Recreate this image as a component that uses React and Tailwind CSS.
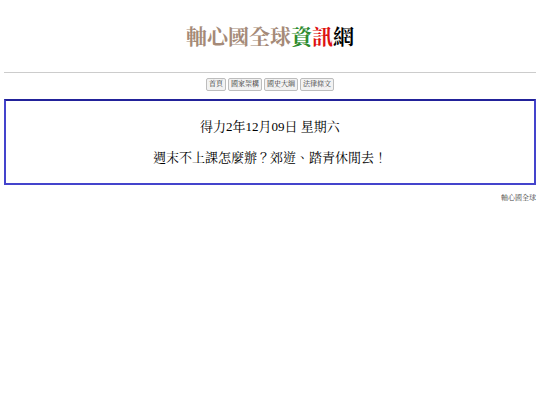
export default function App() {
  const menu = ["首頁", "國家架構", "國史大綱", "法律條文"];

  return (
    <div
      className="min-h-[405px] bg-white px-1 text-black"
      style={{ fontFamily: '"Liberation Serif", "Noto Serif CJK TC", "Noto Sans CJK TC", serif' }}
    >
      <h1 className="pt-[23px] pb-[21px] text-center text-[21px] font-bold leading-[28px]">
        <span className="text-[#a58a78]">軸心國全球</span>
        <span className="text-[#2e8b2e]">資</span>
        <span className="text-[#dd1111]">訊</span>
        <span className="text-black">網</span>
      </h1>

      <hr className="border-t border-[#cccccc]" />

      <div className="flex justify-center gap-[2px] pt-[5px] pb-[8px]">
        {menu.map((m) => (
          <button
            key={m}
            className="h-[13px] rounded-[2px] border border-[#bdbdbd] bg-[#f2f2f2] px-[2px] text-[7px] leading-[11px] text-[#333]"
          >
            {m}
          </button>
        ))}
      </div>

      <div className="border-2 border-[#4444cc] border-t-[#22229a] pt-[16px] pb-[15px] text-center">
        <p className="text-[13px] leading-[20px]">得力2年12月09日 星期六</p>
        <p className="mt-[11px] text-[13px] leading-[20px]">
          週末不上課怎麼辦？郊遊、踏青休閒去！
        </p>
      </div>

      <div className="pt-[7px] text-right text-[7px] leading-[12px] text-[#444]">
        軸心國全球
      </div>
    </div>
  );
}
